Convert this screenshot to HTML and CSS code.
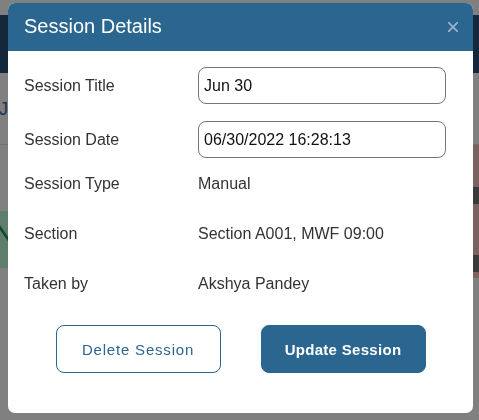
FILE: index.html
```html
<!DOCTYPE html>
<html lang="en">
<head>
<meta charset="utf-8">
<title>Session Details</title>
<link rel="stylesheet" href="styles.css">
</head>
<body>
<div class="page">
  <div class="nav"></div>
  <div class="subbar"><span class="crumb">Jun 30</span></div>
  <div class="content">
    <div class="card-green">
      <svg class="check" width="20" height="57" viewBox="0 0 20 57"><path d="M-1 15 L8 28 L20 10" fill="none" stroke="#0e4a2b" stroke-width="2.5"/></svg>
    </div>
    <div class="card-brown">
      <div class="brown b1"></div>
      <div class="dark"></div>
      <div class="brown b2"></div>
      <div class="dark"></div>
      <div class="brown b3"></div>
    </div>
  </div>
</div>

<div class="modal">
  <div class="modal-header">
    <h1 class="modal-title">Session Details</h1>
    <button class="close" aria-label="Close">
      <svg width="10" height="10" viewBox="0 0 10 10"><path d="M0.5 0.5 L9.5 9.5 M9.5 0.5 L0.5 9.5" stroke="#ffffff" stroke-width="1.8" stroke-linecap="square"/></svg>
    </button>
  </div>
  <div class="modal-body">
    <div class="row row-input first">
      <div class="label">Session Title</div>
      <input class="field" type="text" value="Jun 30">
    </div>
    <div class="row row-input second">
      <div class="label">Session Date</div>
      <input class="field" type="text" value="06/30/2022 16:28:13">
    </div>
    <div class="row row-text">
      <div class="label">Session Type</div>
      <div class="value">Manual</div>
    </div>
    <div class="row row-text">
      <div class="label">Section</div>
      <div class="value">Section A001, MWF 09:00</div>
    </div>
    <div class="row row-text">
      <div class="label">Taken by</div>
      <div class="value">Akshya Pandey</div>
    </div>
    <div class="actions">
      <button class="btn btn-outline">Delete Session</button>
      <button class="btn btn-primary">Update Session</button>
    </div>
  </div>
</div>
</body>
</html>
```
FILE: styles.css
```css
* { box-sizing: border-box; }
html, body {
  margin: 0;
  padding: 0;
  height: 100%;
}
body {
  background: #808080;
  font-family: "Liberation Sans", Arial, sans-serif;
  overflow: hidden;
}
.page {
  padding-top: 15px;
}
.nav {
  height: 58px;
  background: #14283b;
}
.subbar {
  height: 72px;
  display: flex;
  align-items: center;
  border-bottom: 1px solid #707070;
}
.crumb {
  margin-left: -1px;
  margin-top: 2px;
  font-size: 18px;
  color: #1d3550;
}
.content {
  display: flex;
  justify-content: space-between;
  align-items: flex-start;
}
.card-green {
  margin-top: 66px;
  width: 20px;
  height: 57px;
  background: #5f7d6b;
}
.check { display: block; }
.card-brown {
  width: 20px;
  display: flex;
  flex-direction: column;
}
.brown { background: #7b615f; }
.b1 { height: 42px; }
.b2 { height: 51px; }
.b3 { height: 6px; }
.dark { height: 17px; background: #3a3a3a; }

.modal {
  position: fixed;
  left: 8px;
  top: 3px;
  width: 465px;
  height: 410px;
  background: #ffffff;
  border-radius: 7px;
  overflow: hidden;
}
.modal-header {
  height: 48px;
  background: #2b6690;
  display: flex;
  align-items: center;
  justify-content: space-between;
  padding: 0 15px 0 16px;
}
.modal-title {
  margin: 0;
  font-size: 20px;
  font-weight: normal;
  color: #ffffff;
  line-height: 1;
  margin-top: -2px;
}
.close {
  border: 0;
  background: none;
  padding: 0;
  width: 10px;
  height: 10px;
  opacity: 0.5;
  display: flex;
  margin-top: 0;
}
.modal-body {
  padding: 16px 27px 40px 16px;
  display: flex;
  flex-direction: column;
}
.row {
  display: grid;
  grid-template-columns: 174px 1fr;
  align-items: center;
  font-size: 16px;
  color: #333333;
}
.row-input { height: 37px; }
.row-input.second { margin-top: 17px; margin-bottom: 1px; }
.row-text { height: 50px; }
.field {
  width: 248px;
  height: 37px;
  border: 1px solid #767676;
  border-radius: 8px;
  padding: 0 5px;
  font-family: "Liberation Sans", Arial, sans-serif;
  font-size: 16px;
  color: #111111;
  background: #ffffff;
  outline: none;
}
.actions {
  margin-top: 16px;
  display: flex;
  justify-content: center;
  gap: 40px;
  padding-left: 11px;
}
.btn {
  width: 165px;
  height: 48px;
  border-radius: 8px;
  font-family: "Liberation Sans", Arial, sans-serif;
  font-size: 15px;
  cursor: pointer;
}
.btn-outline {
  background: #ffffff;
  border: 1px solid #2b6690;
  color: #2b6690;
  letter-spacing: 0.8px;
}
.btn-primary {
  background: #2b6690;
  border: 1px solid #2b6690;
  color: #ffffff;
  font-weight: bold;
  letter-spacing: 0.3px;
}
```
